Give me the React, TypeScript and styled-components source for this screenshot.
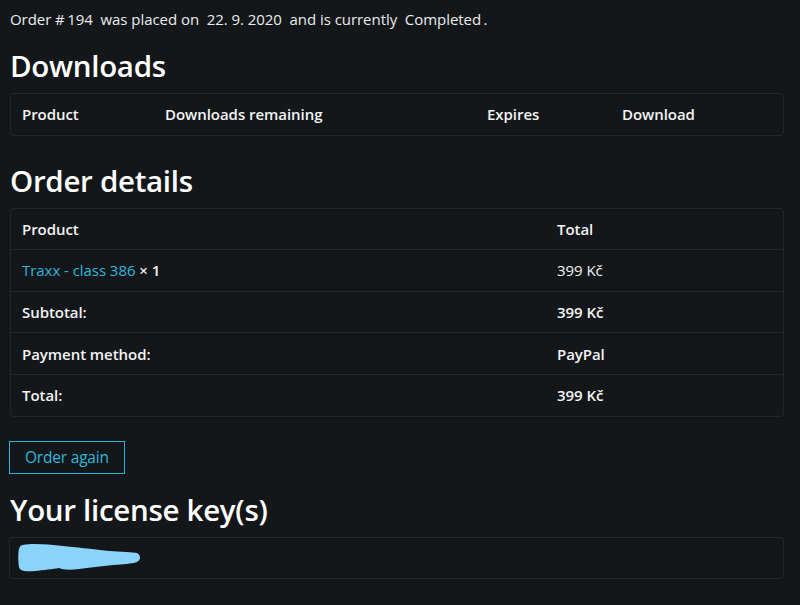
import styled, { createGlobalStyle } from "styled-components";

const GlobalStyle = createGlobalStyle`
  html, body {
    margin: 0;
    padding: 0;
    background: #141719;
  }
  body {
    font-family: "Open Sans", "Noto Sans", sans-serif;
    color: #f2f4f5;
  }
`;

const Page = styled.main`
  padding: 8px 16px 24px 9px;
  width: 800px;
  box-sizing: border-box;
`;

const Notice = styled.p`
  margin: 0 0 0 1px;
  font-size: 15px;
  line-height: 22px;
  letter-spacing: -0.05px;
  color: #e9ecee;
`;

const Heading = styled.h2<{ $top: number }>`
  margin: ${(p) => p.$top}px 0 8px 1px;
  font-size: 29.5px;
  font-weight: 600;
  line-height: 38px;
  letter-spacing: -0.3px;
  color: #ffffff;
`;

const Table = styled.div`
  border: 1px solid #23272a;
  border-radius: 4px;
  margin-left: 1px;
  width: 774px;
  box-sizing: border-box;
`;

const Row = styled.div<{ $cols: string }>`
  display: grid;
  grid-template-columns: ${(p) => p.$cols};
  align-items: center;
  height: 40.6px;
  padding: 0 12px 0 11px;
  font-size: 15px;
  font-weight: 600;
  letter-spacing: -0.05px;
  & + & {
    border-top: 1px solid #23272a;
  }
`;

const Cell = styled.span<{ $light?: boolean }>`
  font-weight: ${(p) => (p.$light ? 400 : 600)};
  white-space: nowrap;
`;

const ProductLink = styled.a`
  color: #2fb6dd;
  font-weight: 400;
  text-decoration: none;
`;

const Button = styled.button`
  margin-top: 24px;
  height: 33px;
  padding: 0 15px;
  background: transparent;
  border: 1px solid #2bb3d6;
  color: #2fb6dd;
  font-family: "Open Sans", "Noto Sans", sans-serif;
  font-size: 15.5px;
  letter-spacing: -0.2px;
  cursor: pointer;
`;

const KeyBox = styled.div`
  border: 1px solid #23272a;
  border-radius: 4px;
  width: 775px;
  height: 42px;
  box-sizing: border-box;
  display: flex;
  align-items: center;
  padding-left: 3px;
`;

const downloadCols = "143px 322px 135px 1fr";
const orderCols = "535px 1fr";

export default function App() {
  return (
    <>
      <GlobalStyle />
      <Page>
        <Notice>
          Order #&thinsp;194&nbsp; was placed on&nbsp; 22. 9. 2020&nbsp; and is currently&nbsp; Completed&thinsp;.
        </Notice>

        <Heading $top={17}>Downloads</Heading>
        <Table>
          <Row $cols={downloadCols}>
            <Cell>Product</Cell>
            <Cell>Downloads remaining</Cell>
            <Cell>Expires</Cell>
            <Cell>Download</Cell>
          </Row>
        </Table>

        <Heading $top={26}>Order details</Heading>
        <Table>
          <Row $cols={orderCols}>
            <Cell>Product</Cell>
            <Cell>Total</Cell>
          </Row>
          <Row $cols={orderCols}>
            <Cell>
              <ProductLink href="#">Traxx - class 386</ProductLink> × 1
            </Cell>
            <Cell $light>399 Kč</Cell>
          </Row>
          <Row $cols={orderCols}>
            <Cell>Subtotal:</Cell>
            <Cell>399 Kč</Cell>
          </Row>
          <Row $cols={orderCols}>
            <Cell>Payment method:</Cell>
            <Cell>PayPal</Cell>
          </Row>
          <Row $cols={orderCols}>
            <Cell>Total:</Cell>
            <Cell>399 Kč</Cell>
          </Row>
        </Table>

        <Button>Order again</Button>

        <Heading $top={17}>Your license key(s)</Heading>
        <KeyBox>
          <svg width="130" height="30" viewBox="0 0 130 30">
            <path
              d="M10 2 C18 0 34 1 50 3 C62 4 78 6 96 8 C108 9 120 9 124 10 C128 12 128 17 124 19 C118 21 110 21 100 22 C88 23 76 25 66 26 C58 27 50 27 46 25 C40 26 30 27 22 28 C12 29 7 28 6 24 C5 18 5 9 6 6 C7 3 8 2 10 2 Z"
              fill="#8ad4fb"
            />
          </svg>
        </KeyBox>
      </Page>
    </>
  );
}
